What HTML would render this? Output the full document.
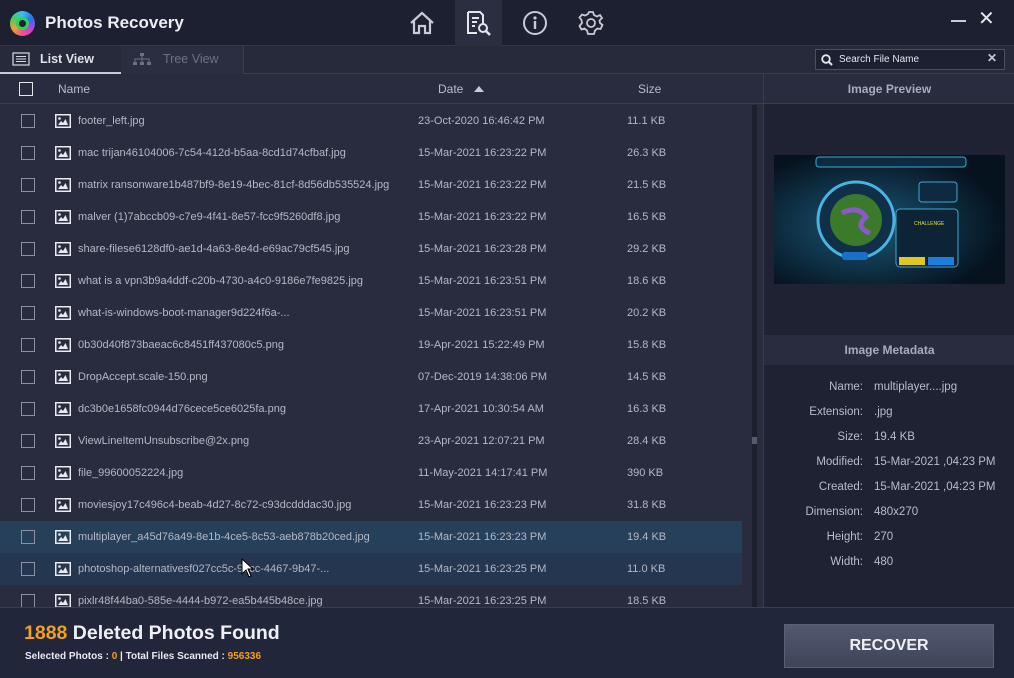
<!DOCTYPE html>
<html><head><meta charset="utf-8"><style>
*{margin:0;padding:0;box-sizing:border-box}
body{width:1014px;height:678px;overflow:hidden;background:#282c3e;font-family:"Liberation Sans",sans-serif;color:#c8cad6;position:relative}
.abs{position:absolute}
#title{left:0;top:0;width:1014px;height:46px;background:#1c2030;border-bottom:1px solid #33384c}
#tabs{left:0;top:46px;width:1014px;height:28px;background:#262a3b;border-bottom:1px solid #383d52}
#hdr{left:0;top:74px;width:763px;height:30px;background:#282c3e;border-bottom:1px solid #383d52;font-size:12px;color:#b8bccb}
.row{position:absolute;left:0;width:742px;height:32px;font-size:11px;color:#b4b8c6}
.row .cb{position:absolute;left:21px;top:9px;width:14px;height:14px;border:1px solid #8c90a0}
.row .ic{position:absolute;left:55px;top:9px;width:16px;height:14px}
.row .n{position:absolute;left:78px;top:10px}
.row .d{position:absolute;left:418px;top:10px}
.row .s{position:absolute;left:627px;top:10px}
#right{left:763px;top:74px;width:251px;height:533px;background:#1f2232;border-left:1px solid #383d52}
#footer{left:0;top:607px;width:1014px;height:71px;background:#22263a;border-top:1px solid #383d52}
.md{position:absolute;font-size:11.5px;color:#b8bccb}
</style></head><body>
<svg width="0" height="0" style="position:absolute"><defs><symbol id="pic" viewBox="0 0 16 14"><rect x="0.75" y="0.75" width="14.5" height="12.5" fill="none" stroke="#e8eaf0" stroke-width="1.5"/><circle cx="4.5" cy="4.5" r="1.3" fill="#e8eaf0"/><path d="M3 11 L6 7 L8 9 L10.5 5 L13 11 Z" fill="#e8eaf0"/></symbol></defs></svg>
<div id="title" class="abs">
 <div class="abs" style="left:10px;top:11px;width:25px;height:25px;border-radius:50%;background:conic-gradient(#3cc0f0,#2a6de8,#c040e0,#f05090,#f0a030,#40d060,#3cc0f0)"></div>
 <div class="abs" style="left:16px;top:17px;width:13px;height:13px;border-radius:50%;background:#1c2030;border:3px solid #30d060"></div>
 <div class="abs" style="left:45px;top:13px;font-size:17px;font-weight:bold;color:#eceef4">Photos Recovery</div>
 <svg class="abs" style="left:408px;top:10px" width="28" height="26" viewBox="0 0 28 26"><path d="M3 13 L14 3 L25 13 M6 11 V23 H11 V16 H17 V23 H22 V11" fill="none" stroke="#c8cad6" stroke-width="2.2"/></svg>
 <div class="abs" style="left:455px;top:0;width:47px;height:46px;background:#2a2e40"></div>
 <svg class="abs" style="left:465px;top:10px" width="28" height="26" viewBox="0 0 28 26"><path d="M3 2 H15 L18 5 V14 M3 2 V23 H12 M7 8 H14 M7 12 H12 M7 16 H10" fill="none" stroke="#e4e6ee" stroke-width="2"/><circle cx="18" cy="18" r="4" fill="none" stroke="#e4e6ee" stroke-width="2"/><path d="M21 21 L25 25" stroke="#e4e6ee" stroke-width="2.5"/></svg>
 <svg class="abs" style="left:522px;top:10px" width="26" height="26"><circle cx="13" cy="13" r="11" fill="none" stroke="#c8cad6" stroke-width="2"/><circle cx="13" cy="8" r="1.6" fill="#c8cad6"/><rect x="11.8" y="11" width="2.4" height="8" fill="#c8cad6"/></svg>
 <svg class="abs" style="left:578px;top:10px" width="26" height="26" viewBox="0 0 26 26"><path d="M11 2 H15 L16 5 L19 6.5 L22 5 L24 8 L21.5 10.5 L22 13 L24.5 15 L22.5 19 L19.5 18.5 L17 20.5 L16 24 H10 L9 20.5 L6.5 18.5 L3.5 19.5 L1.5 16 L4 13 L3.5 10 L1.5 7.5 L4 4.5 L7 5.5 L10 4 Z" fill="none" stroke="#c8cad6" stroke-width="1.8"/><circle cx="13" cy="13" r="4" fill="none" stroke="#c8cad6" stroke-width="1.8"/></svg>
 <div class="abs" style="left:951px;top:20px;width:15px;height:2px;background:#c8cad6"></div>
 <div class="abs" style="left:978px;top:6px;font-size:20px;color:#e4e6ee">✕</div>
</div>
<div id="tabs" class="abs">
 <div class="abs" style="left:0;top:0;width:121px;height:28px;background:#262a3b;border-bottom:2px solid #c8cad6"></div>
 <svg class="abs" style="left:12px;top:6px" width="18" height="14"><rect x="1" y="1" width="16" height="12" fill="none" stroke="#d8dae4" stroke-width="1.2"/><path d="M4 4.5H14M4 7H14M4 9.5H14" stroke="#d8dae4"/></svg>
 <div class="abs" style="left:40px;top:6px;font-size:12.5px;font-weight:bold;color:#e0e2ea">List View</div>
 <div class="abs" style="left:121px;top:0;width:123px;height:28px;background:#2a2e40;border-right:1px solid #383d52"></div>
 <svg class="abs" style="left:132px;top:6px" width="20" height="14"><rect x="8" y="1" width="4" height="3" fill="#6c7084"/><rect x="1" y="10" width="4" height="3" fill="#6c7084"/><rect x="8" y="10" width="4" height="3" fill="#6c7084"/><rect x="15" y="10" width="4" height="3" fill="#6c7084"/><path d="M10 4V10M3 10V7H17V10" stroke="#6c7084" fill="none"/></svg>
 <div class="abs" style="left:163px;top:6px;font-size:12.5px;color:#6c7084">Tree View</div>
 <div class="abs" style="left:815px;top:3px;width:190px;height:21px;background:#1c2030;border:1px solid #4a4f64"></div>
 <svg class="abs" style="left:821px;top:8px" width="12" height="12"><circle cx="5" cy="5" r="3.8" fill="none" stroke="#e4e6ee" stroke-width="1.8"/><path d="M8 8L11 11" stroke="#e4e6ee" stroke-width="2"/></svg>
 <div class="abs" style="left:839px;top:8px;font-size:10px;color:#e4e6ee">Search File Name</div>
 <div class="abs" style="left:987px;top:5px;font-size:12px;font-weight:bold;color:#c8cad6">✕</div>
</div>
<div id="hdr" class="abs">
 <div class="abs" style="left:19px;top:8px;width:14px;height:14px;border:1.5px solid #e4e6ee"></div>
 <div class="abs" style="left:58px;top:8px">Name</div>
 <div class="abs" style="left:438px;top:8px">Date</div>
 <div class="abs" style="left:474px;top:12px;width:0;height:0;border-left:5px solid transparent;border-right:5px solid transparent;border-bottom:6px solid #c8cad6"></div>
 <div class="abs" style="left:638px;top:8px">Size</div>
</div>
<div class="abs" style="left:752px;top:105px;width:5px;height:502px;background:#1c1f2c"></div>
<div class="abs" style="left:752px;top:437px;width:5px;height:7px;background:#555a6e"></div>
<div id="rows">
<div class="row" style="top:105px"><div class="cb"></div><svg class="ic"><use href="#pic"/></svg><div class="n">footer_left.jpg</div><div class="d">23-Oct-2020 16:46:42 PM</div><div class="s">11.1 KB</div></div>
<div class="row" style="top:137px"><div class="cb"></div><svg class="ic"><use href="#pic"/></svg><div class="n">mac trijan46104006-7c54-412d-b5aa-8cd1d74cfbaf.jpg</div><div class="d">15-Mar-2021 16:23:22 PM</div><div class="s">26.3 KB</div></div>
<div class="row" style="top:169px"><div class="cb"></div><svg class="ic"><use href="#pic"/></svg><div class="n">matrix ransonware1b487bf9-8e19-4bec-81cf-8d56db535524.jpg</div><div class="d">15-Mar-2021 16:23:22 PM</div><div class="s">21.5 KB</div></div>
<div class="row" style="top:201px"><div class="cb"></div><svg class="ic"><use href="#pic"/></svg><div class="n">malver (1)7abccb09-c7e9-4f41-8e57-fcc9f5260df8.jpg</div><div class="d">15-Mar-2021 16:23:22 PM</div><div class="s">16.5 KB</div></div>
<div class="row" style="top:233px"><div class="cb"></div><svg class="ic"><use href="#pic"/></svg><div class="n">share-filese6128df0-ae1d-4a63-8e4d-e69ac79cf545.jpg</div><div class="d">15-Mar-2021 16:23:28 PM</div><div class="s">29.2 KB</div></div>
<div class="row" style="top:265px"><div class="cb"></div><svg class="ic"><use href="#pic"/></svg><div class="n">what is a vpn3b9a4ddf-c20b-4730-a4c0-9186e7fe9825.jpg</div><div class="d">15-Mar-2021 16:23:51 PM</div><div class="s">18.6 KB</div></div>
<div class="row" style="top:297px"><div class="cb"></div><svg class="ic"><use href="#pic"/></svg><div class="n">what-is-windows-boot-manager9d224f6a-...</div><div class="d">15-Mar-2021 16:23:51 PM</div><div class="s">20.2 KB</div></div>
<div class="row" style="top:329px"><div class="cb"></div><svg class="ic"><use href="#pic"/></svg><div class="n">0b30d40f873baeac6c8451ff437080c5.png</div><div class="d">19-Apr-2021 15:22:49 PM</div><div class="s">15.8 KB</div></div>
<div class="row" style="top:361px"><div class="cb"></div><svg class="ic"><use href="#pic"/></svg><div class="n">DropAccept.scale-150.png</div><div class="d">07-Dec-2019 14:38:06 PM</div><div class="s">14.5 KB</div></div>
<div class="row" style="top:393px"><div class="cb"></div><svg class="ic"><use href="#pic"/></svg><div class="n">dc3b0e1658fc0944d76cece5ce6025fa.png</div><div class="d">17-Apr-2021 10:30:54 AM</div><div class="s">16.3 KB</div></div>
<div class="row" style="top:425px"><div class="cb"></div><svg class="ic"><use href="#pic"/></svg><div class="n">ViewLineItemUnsubscribe@2x.png</div><div class="d">23-Apr-2021 12:07:21 PM</div><div class="s">28.4 KB</div></div>
<div class="row" style="top:457px"><div class="cb"></div><svg class="ic"><use href="#pic"/></svg><div class="n">file_99600052224.jpg</div><div class="d">11-May-2021 14:17:41 PM</div><div class="s">390 KB</div></div>
<div class="row" style="top:489px"><div class="cb"></div><svg class="ic"><use href="#pic"/></svg><div class="n">moviesjoy17c496c4-beab-4d27-8c72-c93dcdddac30.jpg</div><div class="d">15-Mar-2021 16:23:23 PM</div><div class="s">31.8 KB</div></div>
<div class="row" style="top:521px;background:#26405a"><div class="cb"></div><svg class="ic"><use href="#pic"/></svg><div class="n">multiplayer_a45d76a49-8e1b-4ce5-8c53-aeb878b20ced.jpg</div><div class="d">15-Mar-2021 16:23:23 PM</div><div class="s">19.4 KB</div></div>
<div class="row" style="top:553px;background:#243650"><div class="cb"></div><svg class="ic"><use href="#pic"/></svg><div class="n">photoshop-alternativesf027cc5c-90cc-4467-9b47-...</div><div class="d">15-Mar-2021 16:23:25 PM</div><div class="s">11.0 KB</div></div>
<div class="row" style="top:585px;height:22px;overflow:hidden"><div class="cb"></div><svg class="ic"><use href="#pic"/></svg><div class="n">pixlr48f44ba0-585e-4444-b972-ea5b445b48ce.jpg</div><div class="d">15-Mar-2021 16:23:25 PM</div><div class="s">18.5 KB</div></div>
</div>
<svg class="abs" style="left:241px;top:558px" width="12" height="20"><path d="M1 1V16L5 12L8 19L10 18L7 11H12Z" fill="#fff" stroke="#000" stroke-width="1"/></svg>
<div id="right" class="abs">
 <div class="abs" style="left:0;top:0;width:251px;height:30px;background:#282c3e;border-bottom:1px solid #383d52;text-align:center;font-size:12px;font-weight:bold;color:#a8acbc;line-height:30px">Image Preview</div>
 <svg class="abs" style="left:10px;top:81px" width="231" height="129"><defs><radialGradient id="g" cx="40%" cy="55%" r="60%"><stop offset="0" stop-color="#1a5878"/><stop offset="1" stop-color="#06121e"/></radialGradient></defs><rect width="231" height="129" fill="url(#g)"/><rect x="42" y="2" width="150" height="10" rx="3" fill="#0e2a40" stroke="#3fa8d0"/><circle cx="82" cy="65" r="38" fill="#10304a" stroke="#4ab4e0" stroke-width="3"/><circle cx="82" cy="65" r="26" fill="#3a7a2a"/><path d="M68 58 Q84 50 92 62 Q80 72 96 78" stroke="#8a5ac8" stroke-width="5" fill="none"/><rect x="122" y="54" width="62" height="58" rx="4" fill="#0c2436" stroke="#3fa8d0"/><text x="140" y="70" font-size="5" fill="#e0e040" font-family="Liberation Sans">CHALLENGE</text><rect x="125" y="102" width="26" height="8" fill="#e0c820"/><rect x="154" y="102" width="26" height="8" fill="#1a80e0"/><rect x="68" y="97" width="26" height="8" rx="3" fill="#1a70c8"/><rect x="145" y="27" width="38" height="20" rx="3" fill="#0e2a40" stroke="#3fa8d0"/></svg>
 <div class="abs" style="left:0;top:261px;width:251px;height:30px;background:#282c3e;text-align:center;font-size:12px;font-weight:bold;color:#a8acbc;line-height:30px">Image Metadata</div>
 <div class="md" style="right:151px;top:307px">Name:</div><div class="md" style="left:110px;top:307px">multiplayer....jpg</div>
 <div class="md" style="right:151px;top:332px">Extension:</div><div class="md" style="left:110px;top:332px">.jpg</div>
 <div class="md" style="right:151px;top:357px">Size:</div><div class="md" style="left:110px;top:357px">19.4 KB</div>
 <div class="md" style="right:151px;top:382px">Modified:</div><div class="md" style="left:110px;top:382px">15-Mar-2021 ,04:23 PM</div>
 <div class="md" style="right:151px;top:407px">Created:</div><div class="md" style="left:110px;top:407px">15-Mar-2021 ,04:23 PM</div>
 <div class="md" style="right:151px;top:432px">Dimension:</div><div class="md" style="left:110px;top:432px">480x270</div>
 <div class="md" style="right:151px;top:457px">Height:</div><div class="md" style="left:110px;top:457px">270</div>
 <div class="md" style="right:151px;top:482px">Width:</div><div class="md" style="left:110px;top:482px">480</div>
</div>
<div id="footer" class="abs">
 <div class="abs" style="left:24px;top:14px;font-size:19.5px;font-weight:bold;color:#f0f0f4"><span style="color:#f0a020">1888</span> Deleted Photos Found</div>
 <div class="abs" style="left:25px;top:43px;font-size:10px;font-weight:bold;color:#e8e8ee">Selected Photos : <span style="color:#f0a020">0</span> | Total Files Scanned : <span style="color:#f0a020">956336</span></div>
 <div class="abs" style="left:784px;top:16px;width:210px;height:44px;background:linear-gradient(#54586e,#40445a);border:1px solid #5c6076;text-align:center;line-height:42px;font-size:16px;font-weight:bold;color:#f0f0f4">RECOVER</div>
</div>
</body></html>
